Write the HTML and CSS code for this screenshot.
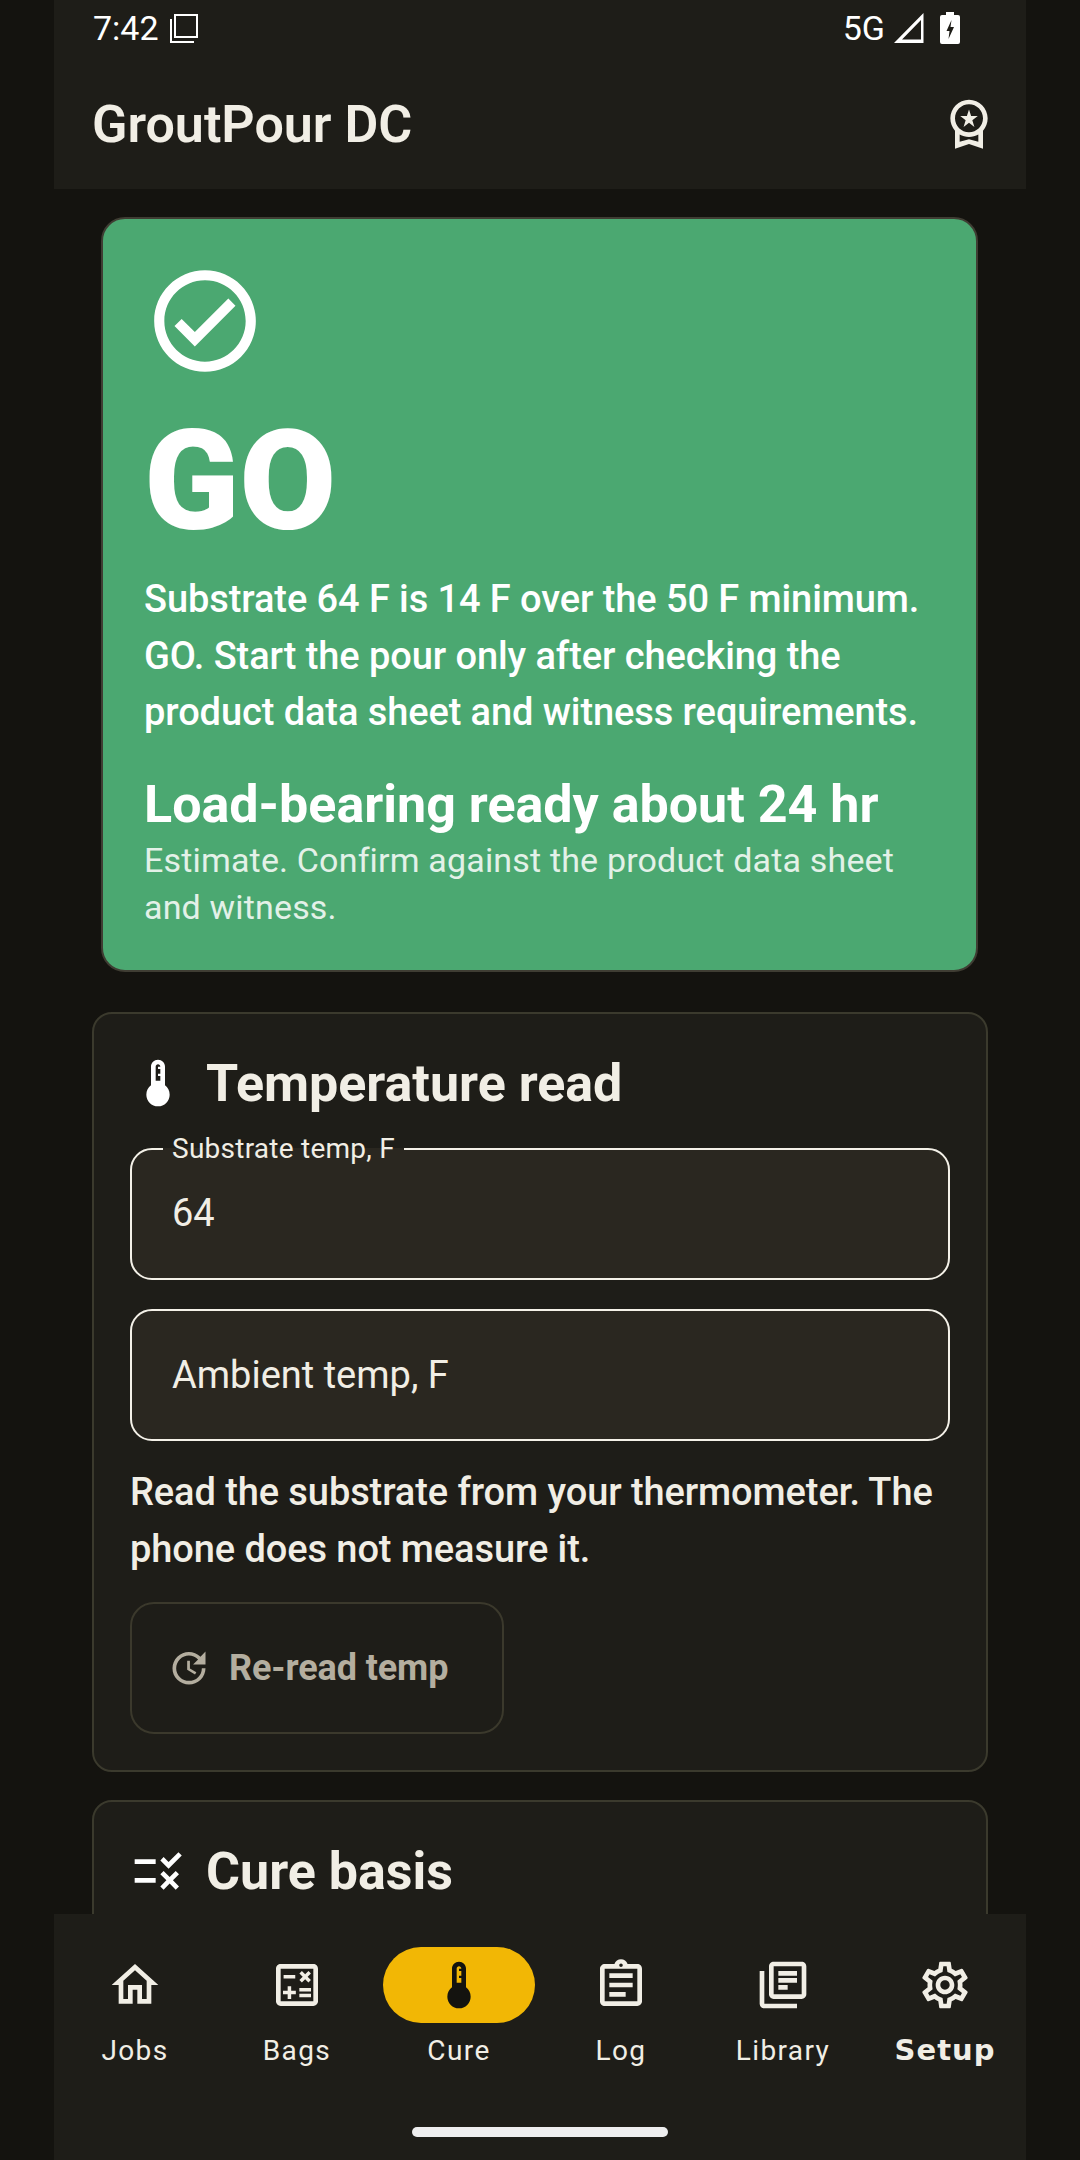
FILE: index.html
```html
<!DOCTYPE html>
<html lang="en">
<head>
<meta charset="utf-8">
<title>GroutPour DC</title>
<link rel="stylesheet" href="styles.css">
</head>
<body>
<div class="app">
  <header class="top">
    <div class="status">
      <span class="clock">7:42</span>
      <svg class="copy-glyph" viewBox="0 0 28 30"><path d="M5 2h22v22H5z M1 6v23h23" fill="none" stroke="#fff" stroke-width="2"/></svg>
      <span class="spacer"></span>
      <span class="network">5G</span>
      <svg class="signal" viewBox="0 0 30 30"><path d="M29.500 0v30H0z M27 7 8 26.500h19z" fill="#fff" fill-rule="evenodd"/></svg>
      <svg class="battery" viewBox="0 0 20 32"><path d="M6 0h8v3h4a2 2 0 0 1 2 2v25a2 2 0 0 1-2 2H2a2 2 0 0 1-2-2V5a2 2 0 0 1 2-2h4z M11.500 8 6.500 19h3L8.500 27l5.500-12h-3.500z" fill="#fff" fill-rule="evenodd"/></svg>
    </div>
    <div class="appbar">
      <h1 class="title">GroutPour DC</h1>
      <svg class="icon" viewBox="0 0 24 24"><path d="M9.680 13.690 12 11.930l2.310 1.760-.88-2.850L15.750 9h-2.840L12 6.190 11.090 9H8.250l2.310 1.840-.88 2.850zM20 10c0-4.420-3.580-8-8-8s-8 3.580-8 8c0 2.030.76 3.870 2 5.280V23l6-2 6 2v-7.720c1.240-1.410 2-3.250 2-5.280zm-8-6c3.310 0 6 2.690 6 6s-2.690 6-6 6-6-2.690-6-6 2.690-6 6-6zm0 15-4 1.020v-3.100c1.180.68 2.540 1.080 4 1.080s2.820-.4 4-1.080v3.100L12 19z"/></svg>
    </div>
  </header>

  <main class="content">
    <section class="verdict">
      <svg class="verdict-icon" viewBox="0 0 24 24"><path d="M12 2C6.480 2 2 6.480 2 12s4.480 10 10 10 10-4.480 10-10S17.520 2 12 2zm0 18c-4.410 0-8-3.590-8-8s3.590-8 8-8 8 3.590 8 8-3.590 8-8 8zm4.590-12.420L10 14.170l-2.590-2.580L6 13l4 4 8-8z"/></svg>
      <div class="verdict-word">GO</div>
      <p class="verdict-text">Substrate 64 F is 14 F over the 50 F minimum. GO. Start the pour only after checking the product data sheet and witness requirements.</p>
      <div class="verdict-ready">Load-bearing ready about 24 hr</div>
      <p class="verdict-note">Estimate. Confirm against the product data sheet and witness.</p>
    </section>

    <section class="card">
      <h2 class="card-head">
        <svg class="icon icon-white" viewBox="0 0 24 24"><path d="M15 13V5c0-1.660-1.340-3-3-3S9 3.340 9 5v8c-1.210.91-2 2.370-2 4 0 2.760 2.240 5 5 5s5-2.240 5-5c0-1.630-.79-3.090-2-4zm-4-8c0-.55.45-1 1-1s1 .45 1 1h-1v1h1v2h-1v1h1v2h-2V5z"/></svg>
        <span>Temperature read</span>
      </h2>
      <fieldset class="field">
        <legend class="field-label">Substrate temp, F</legend>
        <span class="field-value">64</span>
      </fieldset>
      <div class="field field-empty"><span class="field-value">Ambient temp, F</span></div>
      <p class="hint">Read the substrate from your thermometer. The phone does not measure it.</p>
      <button class="ghost" type="button">
        <svg class="ghost-icon" viewBox="0 0 24 24"><path d="M21 10.120h-6.780l2.740-2.820c-2.730-2.700-7.150-2.800-9.880-.1-2.730 2.710-2.730 7.080 0 9.790s7.150 2.710 9.880 0C18.320 15.650 19 14.080 19 12.100h2c0 1.980-.88 4.550-2.640 6.290-3.510 3.480-9.210 3.480-12.720 0-3.500-3.470-3.530-9.110-.02-12.580s9.140-3.470 12.650 0L21 3v7.120zM12.500 8v4.250l3.500 2.080-.72 1.210L11 13V8h1.500z"/></svg>
        Re-read temp
      </button>
    </section>

    <section class="card">
      <h2 class="card-head">
        <svg class="icon icon-white" viewBox="0 0 24 24"><path d="M16.540 11 13 7.460l1.410-1.410 2.120 2.120 4.240-4.240 1.410 1.410L16.540 11zM11 7H2v2h9V7zm10 6.410L19.590 12 17 14.590 14.410 12 13 13.410 15.590 16 13 18.590 14.410 20 17 17.410 19.590 20 21 18.590 18.410 16 21 13.410zM11 15H2v2h9v-2z"/></svg>
        <span>Cure basis</span>
      </h2>
    </section>
  </main>

  <nav class="nav">
    <div class="tabs">
      <a class="tab">
        <span class="tab-icon"><svg class="icon" viewBox="0 0 24 24"><path d="M12 5.690l5 4.500V18h-2v-6H9v6H7v-7.810l5-4.500M12 3L2 12h3v8h6v-6h2v6h6v-8h3L12 3z"/></svg></span>
        <span class="tab-label">Jobs</span>
      </a>
      <a class="tab">
        <span class="tab-icon"><svg class="icon" viewBox="0 0 24 24"><path d="M19 3H5c-1.100 0-2 .9-2 2v14c0 1.100.9 2 2 2h14c1.100 0 2-.9 2-2V5c0-1.100-.9-2-2-2zm0 16H5V5h14v14zM6.250 7.720h5v1.500h-5zM13 15.750h5v1.500h-5zM13 13.250h5v1.500h-5zM8 18h1.500v-2h2v-1.500h-2v-2H8v2H6V16h2zM14.090 10.950l1.410-1.410 1.410 1.410 1.060-1.060-1.410-1.420 1.410-1.410L16.910 6 15.500 7.410 14.090 6l-1.060 1.060 1.410 1.410-1.410 1.420z"/></svg></span>
        <span class="tab-label">Bags</span>
      </a>
      <a class="tab tab-current">
        <span class="tab-icon"><svg class="icon" viewBox="0 0 24 24"><path d="M15 13V5c0-1.660-1.340-3-3-3S9 3.340 9 5v8c-1.210.91-2 2.370-2 4 0 2.760 2.240 5 5 5s5-2.240 5-5c0-1.630-.79-3.090-2-4zm-4-8c0-.55.45-1 1-1s1 .45 1 1h-1v1h1v2h-1v1h1v2h-2V5z"/></svg></span>
        <span class="tab-label">Cure</span>
      </a>
      <a class="tab">
        <span class="tab-icon"><svg class="icon" viewBox="0 0 24 24"><path d="M7 15h7v2H7zm0-4h10v2H7zm0-4h10v2H7zm12-4h-4.180C14.400 1.840 13.300 1 12 1c-1.300 0-2.400.84-2.820 2H5c-.14 0-.27.01-.4.04-.39.08-.74.28-1.010.55-.18.18-.33.4-.43.64-.1.23-.16.49-.16.77v14c0 .27.06.54.16.78s.25.45.43.64c.27.27.62.47 1.010.55.13.02.26.03.4.03h14c1.100 0 2-.9 2-2V5c0-1.100-.9-2-2-2zm-7-.25c.41 0 .75.34.75.75s-.34.75-.75.75-.75-.34-.75-.75.34-.75.75-.75zM19 19H5V5h14v14z"/></svg></span>
        <span class="tab-label">Log</span>
      </a>
      <a class="tab">
        <span class="tab-icon"><svg class="icon" viewBox="0 0 24 24"><path d="M4 6H2v14c0 1.100.9 2 2 2h14v-2H4V6zm16-4H8c-1.100 0-2 .9-2 2v12c0 1.100.9 2 2 2h12c1.100 0 2-.9 2-2V4c0-1.100-.9-2-2-2zm0 14H8V4h12v12zM10 9h8v2h-8zm0 3h4v2h-4zm0-6h8v2h-8z"/></svg></span>
        <span class="tab-label">Library</span>
      </a>
      <a class="tab">
        <span class="tab-icon"><svg class="icon" viewBox="0 0 24 24"><path d="M19.430 12.980c.04-.32.07-.64.07-.98 0-.34-.03-.66-.07-.98l2.110-1.650c.19-.15.24-.42.12-.64l-2-3.460c-.09-.16-.26-.25-.44-.25-.06 0-.12.01-.17.03l-2.490 1c-.52-.4-1.080-.73-1.690-.98l-.38-2.650C14.460 2.180 14.250 2 14 2h-4c-.25 0-.46.18-.49.42l-.38 2.650c-.61.25-1.170.59-1.690.98l-2.490-1c-.06-.02-.12-.03-.18-.03-.17 0-.34.09-.43.25l-2 3.460c-.13.22-.07.49.12.64l2.110 1.650c-.04.32-.07.65-.07.98 0 .33.03.66.07.98l-2.110 1.650c-.19.15-.24.42-.12.64l2 3.460c.09.16.26.25.44.25.06 0 .12-.01.17-.03l2.490-1c.52.4 1.080.73 1.690.98l.38 2.650c.03.24.24.42.49.42h4c.25 0 .46-.18.49-.42l.38-2.650c.61-.25 1.170-.59 1.690-.98l2.490 1c.06.02.12.03.18.03.17 0 .34-.09.43-.25l2-3.460c.12-.22.07-.49-.12-.64l-2.110-1.650zm-1.980-1.710c.04.31.05.52.05.73 0 .21-.02.43-.05.73l-.14 1.130.89.7 1.080.84-.7 1.210-1.270-.51-1.040-.42-.9.68c-.43.32-.84.56-1.250.73l-1.060.43-.16 1.130-.2 1.350h-1.400l-.19-1.350-.16-1.130-1.060-.43c-.43-.18-.83-.41-1.230-.71l-.91-.7-1.060.43-1.270.51-.7-1.210 1.080-.84.89-.7-.14-1.130c-.03-.31-.05-.54-.05-.74s.02-.43.05-.73l.14-1.130-.89-.7-1.080-.84.7-1.210 1.270.51 1.040.42.9-.68c.43-.32.84-.56 1.250-.73l1.060-.43.16-1.130.2-1.350h1.390l.19 1.350.16 1.130 1.060.43c.43.18.83.41 1.230.71l.91.7 1.060-.43 1.270-.51.7 1.210-1.070.85-.89.7.14 1.130zM12 8c-2.210 0-4 1.790-4 4s1.790 4 4 4 4-1.790 4-4-1.790-4-4-4zm0 6c-1.100 0-2-.9-2-2s.9-2 2-2 2 .9 2 2-.9 2-2 2z"/></svg></span>
        <span class="tab-label tab-label-strong">Setup</span>
      </a>
    </div>
    <div class="home-bar"></div>
  </nav>
</div>
</body>
</html>
```

FILE: styles.css
```css
* { box-sizing: border-box; }

html, body {
  margin: 0;
  height: 100%;
  background: #14130f;
}

body {
  font-family: Roboto, "Liberation Sans", sans-serif;
  color: #f1eee5;
}

.app {
  width: 972px;
  height: 2160px;
  margin: 0 auto;
  display: flex;
  flex-direction: column;
  overflow: hidden;
}

/* Status strip and title bar */
.top {
  background: #1e1d18;
  height: 189px;
  flex: none;
}

.status {
  height: 56px;
  padding-left: 39px;
  padding-right: 66px;
  display: flex;
  align-items: center;
  color: #fff;
  font-size: 34px;
}

.clock { margin-right: 11px; }
.copy-glyph { width: 28px; height: 30px; }
.spacer { flex: 1; }
.network { margin-right: 9px; }
.signal { width: 30px; height: 30px; margin-right: 16px; }
.battery { width: 20px; height: 32px; }

.appbar {
  height: 133px;
  padding: 0 29px 0 38px;
  display: flex;
  align-items: center;
  justify-content: space-between;
}

.title {
  margin: 0;
  font-size: 52px;
  font-weight: 600;
  line-height: 1;
  position: relative;
  top: 2px;
}

.icon {
  width: 56px;
  height: 56px;
  flex: none;
  fill: currentColor;
  display: block;
}

.icon-white { color: #fff; }

/* Scrolling body */
.content {
  flex: 1;
  min-height: 0;
  overflow: hidden;
  padding: 28px 38px 0;
  display: flex;
  flex-direction: column;
  gap: 28px;
}

.verdict {
  flex: none;
  height: 755px;
  margin: 0 10px 12px 9px;
  padding: 41px 40px 0 41px;
  background: #4ba871;
  border: 2px solid #3f3d33;
  border-radius: 24px;
  color: #fff;
}

.verdict-icon {
  display: block;
  width: 122px;
  height: 122px;
  fill: #fff;
}

.verdict-word {
  font-size: 140px;
  font-weight: 900;
  line-height: 1;
  margin-top: 29px;
}

.verdict-text {
  margin: 20px 0 0;
  font-size: 38px;
  font-weight: 500;
  letter-spacing: -0.09px;
  line-height: 56.5px;
}

.verdict-ready {
  margin-top: 32px;
  font-size: 52px;
  font-weight: 700;
  line-height: 64px;
}

.verdict-note {
  margin: 0;
  font-size: 34px;
  line-height: 47px;
  letter-spacing: 0.17px;
  color: #e3f1e8;
}

.card {
  flex: none;
  padding: 34px 36px 36px;
  background: #1e1d18;
  border: 2px solid #3b3a2d;
  border-radius: 20px;
}

.card-head {
  margin: 0;
  height: 70px;
  display: flex;
  align-items: center;
  gap: 20px;
  font-size: 52px;
  font-weight: 700;
  color: #f1eee5;
}

.field {
  display: block;
  min-width: 0;
  height: 146px;
  margin: 16px 0 0;
  padding: 0 0 0 40px;
  background: #2a2720;
  border: 2px solid #f4f1e8;
  border-radius: 22px;
}

.field-label {
  margin-left: -9px;
  padding: 0 9px;
  font-size: 28px;
  line-height: 30px;
  letter-spacing: 0.25px;
}

.field-value {
  display: block;
  font-size: 38px;
  line-height: 42px;
  padding-top: 28px;
}

.field-empty {
  height: 132px;
  margin-top: 29px;
  display: flex;
  align-items: center;
}

.field-empty .field-value { padding-top: 0; }

.hint {
  margin: 23px 0 0;
  font-size: 38px;
  font-weight: 500;
  letter-spacing: -0.09px;
  line-height: 56.5px;
}

.ghost {
  margin-top: 25px;
  width: 374px;
  height: 132px;
  padding: 0 0 0 35px;
  display: flex;
  align-items: center;
  gap: 18px;
  background: transparent;
  border: 2px solid #3b392c;
  border-radius: 24px;
  font-family: inherit;
  font-size: 36px;
  font-weight: 700;
  letter-spacing: -0.1px;
  color: #b4ae9f;
}

.ghost-icon {
  width: 44px;
  height: 44px;
  fill: currentColor;
}

/* Bottom navigation */
.nav {
  flex: none;
  position: relative;
  height: 246px;
  background: #1e1d18;
}

.tabs {
  display: grid;
  grid-template-columns: repeat(6, 1fr);
  padding-top: 33px;
}

.tab {
  display: flex;
  flex-direction: column;
  align-items: center;
}

.tab-icon {
  width: 152px;
  height: 76px;
  border-radius: 38px;
  display: flex;
  align-items: center;
  justify-content: center;
}

.tab-current .tab-icon {
  background: #f2b705;
  color: #14130f;
}

.tab-label {
  margin-top: 12px;
  font-size: 28px;
  line-height: 32px;
  letter-spacing: 1.4px;
}

.tab-label-strong {
  font-family: "DejaVu Sans", sans-serif;
  font-weight: 700;
  font-size: 29px;
  letter-spacing: 1px;
  margin-top: 11px;
}

.home-bar {
  position: absolute;
  left: 358px;
  bottom: 23px;
  width: 256px;
  height: 10px;
  border-radius: 5px;
  background: #eeeeee;
}
```
